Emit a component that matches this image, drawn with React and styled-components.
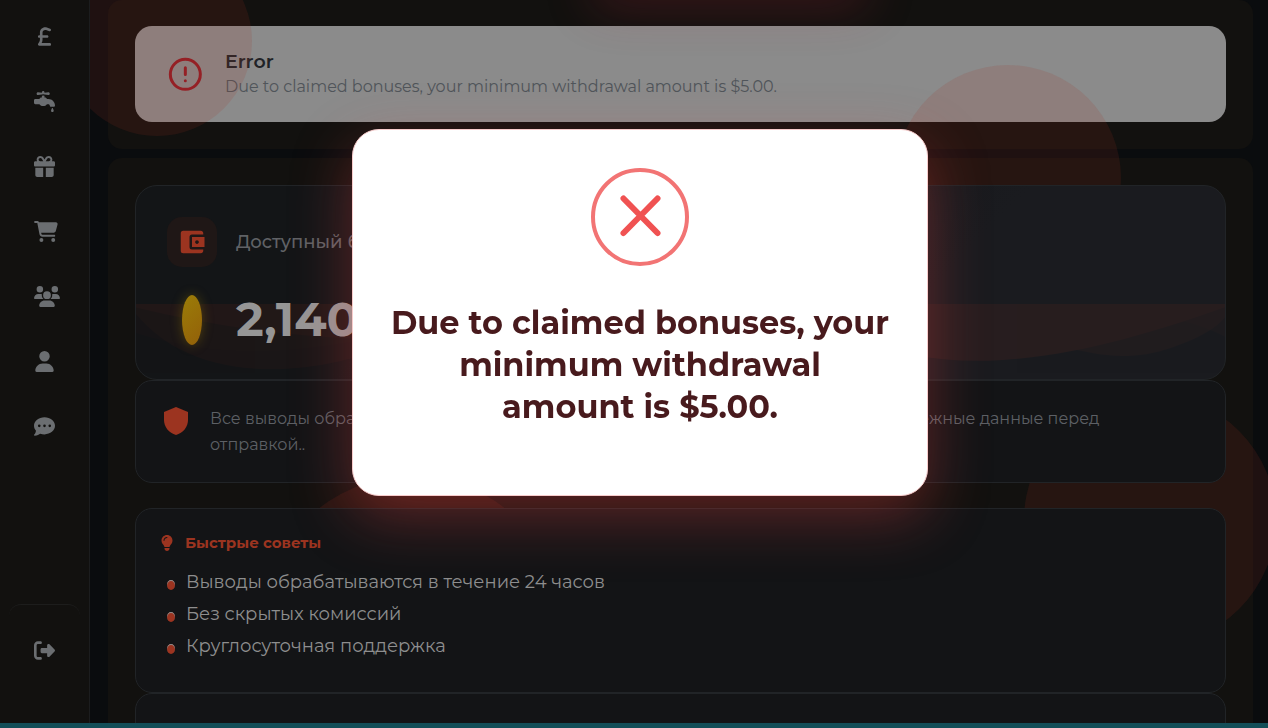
import React from "react";
import styled, { createGlobalStyle } from "styled-components";
import {
  FaSterlingSign,
  FaFaucetDrip,
  FaGift,
  FaCartShopping,
  FaUsers,
  FaUser,
  FaCommentDots,
  FaRightFromBracket,
  FaLightbulb
} from "react-icons/fa6";
import { MdAccountBalanceWallet } from "react-icons/md";

const accent = "#9c3420";

const GlobalStyle = createGlobalStyle`
  * {
    box-sizing: border-box;
  }

  body {
    margin: 0;
    overflow: hidden;
    background: #0a0c0e;
    font-family: Montserrat, Inter, "Noto Sans", sans-serif;
  }
`;

const Page = styled.div`
  position: relative;
  display: flex;
  height: 100vh;
  overflow: hidden;
`;

const Sidebar = styled.nav`
  position: relative;
  z-index: 3;
  display: flex;
  flex-direction: column;
  flex: 0 0 90px;
  padding: 4px 9px 0;
  background: #12110f;
  border-right: 1px solid #1c1d1e;
`;

const NavLink = styled.a`
  display: flex;
  align-items: center;
  height: 65px;
  padding-left: 25px;
  color: #6b6e71;
`;

const NavIcon = styled.span`
  display: flex;
  justify-content: safe center;
  width: 21px;

  svg {
    flex: none;
    width: ${props => props.$width || 21}px;
    height: 21px;
  }
`;

const SidebarFooter = styled.div`
  margin-top: auto;
  height: 124px;
  padding-top: 13px;
  border-top: 1px solid #1d1d1c;
  border-radius: 12px;
`;

const Main = styled.main`
  flex: 1;
  min-width: 0;
  display: flex;
  flex-direction: column;
  gap: 9px;
  padding: 0 15px 0 18px;
`;

const Panel = styled.section`
  flex: none;
  padding: ${props => props.$top || 27}px 27px 27px;
  background: #12110f;
  border-radius: 14px;
`;

const Alert = styled.div`
  display: flex;
  align-items: center;
  gap: 20px;
  height: 96px;
  padding: 0 30px;
  background: #8b8b8b;
  border-radius: 17px;
`;

const AlertTitle = styled.h4`
  margin: 0;
  color: #212327;
  font-size: 19px;
  font-weight: 600;
  line-height: 26px;
`;

const AlertText = styled.p`
  margin: 0;
  color: #50555a;
  font-size: 16px;
  line-height: 24px;
`;

const Bubble = styled.span`
  position: absolute;
  z-index: 1;
  left: ${props => props.$x - props.$r}px;
  top: ${props => props.$y - props.$r}px;
  width: ${props => props.$r * 2}px;
  height: ${props => props.$r * 2}px;
  border-radius: 50%;
  background: rgba(160, 52, 34, 0.14);
`;

const TopGlow = styled.span`
  position: absolute;
  z-index: 1;
  left: 590px;
  top: -40px;
  width: 280px;
  height: 36px;
  border-radius: 20px;
  box-shadow: 0 10px 48px rgba(170, 40, 55, 0.3);
`;

const Card = styled.div`
  position: relative;
  z-index: 2;
  background: #131416;
  border: 1px solid #212427;
  border-radius: 17px;
`;

const Balance = styled(Card)`
  display: grid;
  grid-template-columns: 50px 1fr;
  grid-template-rows: 50px 50px;
  align-items: center;
  justify-items: center;
  gap: 28px 19px;
  height: 195px;
  padding: 31px;
  overflow: hidden;
  border-radius: 22px;
  background: linear-gradient(135deg, #131517 30%, #1a1b1f 70%);
`;

const Wave = styled.svg`
  position: absolute;
  left: 0;
  bottom: 0;
  width: 100%;
  height: 75px;
  fill: ${accent};
  opacity: 0.1;
`;

const WalletBadge = styled.span`
  display: grid;
  place-items: center;
  width: 50px;
  height: 50px;
  border-radius: 15px;
  background: #1f1716;
  color: ${accent};
`;

const BalanceLabel = styled.span`
  justify-self: start;
  color: #606266;
  font-size: 18px;
  font-weight: 500;
`;

const Coin = styled.span`
  position: relative;
  width: 20px;
  height: 50px;
  border-radius: 50%;
  background: linear-gradient(135deg, #9b7d08, #936009);
  box-shadow: 0 0 12px rgba(155, 125, 8, 0.4);
`;

const Amount = styled.strong`
  position: relative;
  justify-self: start;
  color: #969696;
  font-size: 47px;
  font-weight: 700;
  line-height: 50px;
`;

const Notice = styled(Card)`
  display: flex;
  align-items: flex-start;
  gap: 22px;
  padding: 25px 28px 24px;

  svg {
    flex: none;
    margin-top: 1px;
  }
`;

const NoticeText = styled.p`
  margin: 0;
  color: #5d6065;
  font-size: 16px;
  line-height: 26px;
`;

const Tips = styled(Card)`
  margin-top: 25px;
  height: 185px;
  padding: 22px 25px;
`;

const TipsTitle = styled.h5`
  display: flex;
  align-items: center;
  gap: 12px;
  margin: 0 0 11px;
  color: ${accent};
  font-size: 15px;
  font-weight: 700;
  line-height: 24px;

  svg {
    width: 12px;
    height: 16px;
  }
`;

const TipsList = styled.ul`
  margin: 0;
  padding: 0 0 0 6px;
  list-style: none;
`;

const Tip = styled.li`
  display: flex;
  align-items: center;
  gap: 11px;
  color: #8e8e8e;
  font-size: 18px;
  line-height: 32px;

  &:before {
    content: "";
    width: 8px;
    height: 10px;
    margin-top: 5px;
    border-radius: 50%;
    background: ${accent};
    box-shadow: inset 0 1px 0 #8e8e8e;
  }
`;

const NextCard = styled(Card)`
  height: 185px;
`;

const BottomBar = styled.div`
  position: fixed;
  z-index: 4;
  left: 0;
  right: 0;
  bottom: 0;
  height: 5px;
  background: #134e58;
`;

const Overlay = styled.div`
  position: fixed;
  z-index: 5;
  inset: 0;
  display: flex;
  align-items: flex-start;
  justify-content: center;
  padding: 129px 0 0 12px;
`;

const Modal = styled.div`
  width: 576px;
  max-width: 100%;
  min-height: 367px;
  padding: 38px 36px;
  background: #fff;
  border: 1px solid #f8cccc;
  border-radius: 27px;
  box-shadow: 0 20px 60px rgba(239, 68, 68, 0.35);
  text-align: center;
`;

const ModalTitle = styled.h2`
  margin: 32px 0 0;
  color: #481a1d;
  font-size: 32px;
  font-weight: 700;
  line-height: 42px;
`;

const links = [
  { name: "Earn", icon: FaSterlingSign },
  { name: "Faucet", icon: FaFaucetDrip },
  { name: "Bonuses", icon: FaGift },
  { name: "Shop", icon: FaCartShopping, width: 24 },
  { name: "Referrals", icon: FaUsers, width: 26 },
  { name: "Profile", icon: FaUser },
  { name: "Chat", icon: FaCommentDots }
];

const bubbles = [
  { x: 157, y: 41, r: 95 },
  { x: 1008, y: 178, r: 113 },
  { x: 1150, y: 520, r: 126 },
  { x: 412, y: 626, r: 150 }
];

const tips = [
  "Выводы обрабатываются в течение 24 часов",
  "Без скрытых комиссий",
  "Круглосуточная поддержка"
];

const message = "Due to claimed bonuses, your minimum withdrawal amount is $5.00.";

const SidebarLink = ({ name, icon: Icon, width }) => (
  <NavLink href="#" aria-label={name}>
    <NavIcon $width={width}>
      <Icon />
    </NavIcon>
  </NavLink>
);

const AlertIcon = () => (
  <svg
    width="40"
    height="40"
    viewBox="0 0 24 24"
    fill="none"
    stroke="#931e26"
    strokeWidth="1.8"
    strokeLinecap="round"
  >
    <circle cx="12.200" cy="12.200" r="9" />
    <path d="M12.200 8.300v4M12.200 16v.1" />
  </svg>
);

const App = () => {
  return (
    <Page>
      <GlobalStyle />
      <Sidebar>
        {links.map(link => (
          <SidebarLink key={link.name} {...link} />
        ))}
        <SidebarFooter>
          <SidebarLink name="Logout" icon={FaRightFromBracket} />
        </SidebarFooter>
      </Sidebar>

      {bubbles.map(({ x, y, r }) => (
        <Bubble key={x} $x={x} $y={y} $r={r} />
      ))}
      <TopGlow />

      <Main>
        <Panel $top={26}>
          <Alert>
            <AlertIcon />
            <div>
              <AlertTitle>Error</AlertTitle>
              <AlertText>{message}</AlertText>
            </div>
          </Alert>
        </Panel>

        <Panel>
          <Balance>
            <Wave viewBox="0 0 1200 120" preserveAspectRatio="none">
              <path
                opacity=".25"
                d="M0,0V46.29c47.79,22.2,103.59,32.17,158,28,70.36-5.37,136.33-33.31,206.8-37.5C438.64,32.43,512.34,53.67,583,72.05c69.27,18,138.3,24.88,209.4,13.08,36.15-6,69.85-17.84,104.45-29.34C989.49,25,1113-14.29,1200,52.47V0Z"
              />
              <path
                opacity=".5"
                d="M0,0V15.81C13,36.92,27.64,56.86,47.69,72.05,99.41,111.27,165,111,224.58,91.58c31.15-10.15,60.09-26.07,89.67-39.8,40.92-19,84.73-46,130.83-49.67,36.26-2.85,70.9,9.42,98.6,31.56,31.77,25.39,62.32,62,103.63,73,40.44,10.79,81.35-6.69,119.13-24.28s75.16-39,116.92-43.05c59.73-5.85,113.28,22.88,168.9,38.84,30.2,8.66,59,6.17,87.09-7.5,22.43-10.89,48-26.93,60.65-49.24V0Z"
              />
              <path d="M0,0V5.63C149.93,59,314.09,71.32,475.83,42.57c43-7.64,84.23-20.12,127.61-26.46,59-8.63,112.48,12.24,165.56,35.4C827.93,77.22,886,95.24,951.2,90c86.53-7,172.46-45.71,248.8-84.81V0Z" />
            </Wave>
            <WalletBadge>
              <MdAccountBalanceWallet size={30} />
            </WalletBadge>
            <BalanceLabel>Доступный баланс</BalanceLabel>
            <Coin />
            <Amount>2,140</Amount>
          </Balance>

          <Notice>
            <svg width="24" height="28" viewBox="0 0 24 28" fill={accent}>
              <path d="M12 0 24 5V13C24 20 19 26 12 28 5 26 0 20 0 13V5Z" />
            </svg>
            <NoticeText>
              Все выводы обрабатываются в течение 24-х часов. Пожалуйста,
              проверьте свои платежные данные перед отправкой..
            </NoticeText>
          </Notice>

          <Tips>
            <TipsTitle>
              <FaLightbulb />
              Быстрые советы
            </TipsTitle>
            <TipsList>
              {tips.map(tip => (
                <Tip key={tip}>{tip}</Tip>
              ))}
            </TipsList>
          </Tips>

          <NextCard />
        </Panel>
      </Main>

      <BottomBar />

      <Overlay>
        <Modal role="dialog" aria-modal="true" aria-labelledby="modal-title">
          <svg width="98" height="98" viewBox="0 0 98 98" fill="none">
            <circle cx="49" cy="49" r="47" stroke="#f27474" strokeWidth="4" />
            <path
              d="M32.500 30.500 66.500 65M66.500 30.500 32.500 65"
              stroke="#f05252"
              strokeWidth="6"
              strokeLinecap="round"
            />
          </svg>
          <ModalTitle id="modal-title">{message}</ModalTitle>
        </Modal>
      </Overlay>
    </Page>
  );
};

export default App;
